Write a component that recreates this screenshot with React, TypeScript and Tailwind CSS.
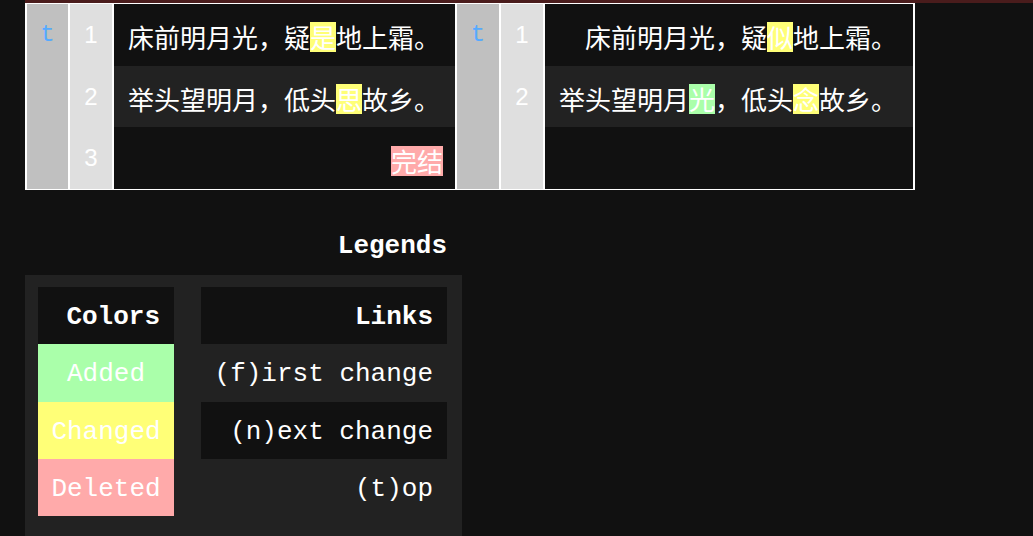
import React from "react";

type Seg = { t: string; c?: "add" | "chg" | "del" };

const hl: Record<string, string> = {
  add: "bg-[#aaffaa]",
  chg: "bg-[#ffff77]",
  del: "bg-[#ffaaaa]",
};

function Line({ segs }: { segs: Seg[] }) {
  return (
    <span className="whitespace-pre leading-[30px]">
      {segs.map((s, i) =>
        s.c ? (
          <span key={i} className={`inline-block h-[30px] leading-[30px] ${hl[s.c]}`}>
            {s.t}
          </span>
        ) : (
          <span key={i}>{s.t}</span>
        )
      )}
    </span>
  );
}

const rowH = ["h-[62px]", "h-[61px]", "h-[62px]"];
const rowBg = ["bg-[#111111]", "bg-[#222222]", "bg-[#111111]"];

function TCol({ w, showT }: { w: string; showT: boolean }) {
  return (
    <div className={`${w} flex flex-col bg-[#c0c0c0]`}>
      {rowH.map((h, i) => (
        <div key={i} className={`${h} flex items-center justify-center`}>
          {i === 0 && showT ? (
            <span className="font-['Liberation_Mono',monospace] text-[24px] text-[#55aaff]">t</span>
          ) : null}
        </div>
      ))}
    </div>
  );
}

function NumCol({ n }: { n: number }) {
  return (
    <div className="w-[42px] flex flex-col bg-[#dfdfdf]">
      {rowH.map((h, i) => (
        <div key={i} className={`${h} flex items-center justify-center`}>
          {i < n ? (
            <span className="font-['Liberation_Sans',sans-serif] text-[24px] text-white">{i + 1}</span>
          ) : null}
        </div>
      ))}
    </div>
  );
}

function TextCol({ w, rows }: { w: string; rows: (React.ReactNode | null)[] }) {
  return (
    <div className={`${w} flex flex-col font-['Noto_Sans_CJK_SC',sans-serif] text-[26px] text-white`}>
      {rowH.map((h, i) => (
        <div key={i} className={`${h} ${rowBg[i]} flex items-center pl-[14px] pr-[12px] pt-[4px]`}>
          {rows[i]}
        </div>
      ))}
    </div>
  );
}

export default function App() {
  const mono = "font-['Liberation_Mono',monospace] text-[26px]";
  return (
    <div className="min-h-screen bg-[#111111] text-white overflow-hidden">
      <div className="ml-[25px] h-[3px] bg-[#4a1c1c]" />
      <div className="ml-[25px] inline-flex gap-[2px] bg-white pl-[2px] pt-[1px] pr-[2px] pb-[1px]">
        <TCol w="w-[41px]" showT />
        <NumCol n={3} />
        <TextCol
          w="w-[341px]"
          rows={[
            <Line segs={[{ t: "床前明月光，疑" }, { t: "是", c: "chg" }, { t: "地上霜。" }]} />,
            <Line segs={[{ t: "举头望明月，低头" }, { t: "思", c: "chg" }, { t: "故乡。" }]} />,
            <div className="w-full text-right">
              <Line segs={[{ t: "完结", c: "del" }]} />
            </div>,
          ]}
        />
        <TCol w="w-[42px]" showT />
        <NumCol n={2} />
        <TextCol
          w="w-[368px]"
          rows={[
            <Line segs={[{ t: "\u3000床前明月光，疑" }, { t: "似", c: "chg" }, { t: "地上霜。" }]} />,
            <Line
              segs={[
                { t: "举头望明月" },
                { t: "光", c: "add" },
                { t: "，低头" },
                { t: "念", c: "chg" },
                { t: "故乡。" },
              ]}
            />,
            null,
          ]}
        />
      </div>

      <div className="ml-[25px] w-[437px]">
        <div className={`${mono} font-bold mt-[41px] mb-[14px] h-[30px] leading-[30px] text-right pr-[15px]`}>
          Legends
        </div>
        <div className={`${mono} bg-[#222222] pt-[12px] pl-[13px] pr-[15px] pb-[30px] flex gap-[27px]`}>
          <div className="w-[136px] flex flex-col">
            <div className="h-[57px] pt-[3px] bg-[#111111] flex items-center justify-end pr-[14px] font-bold">Colors</div>
            <div className="h-[58px] pt-[3px] bg-[#aaffaa] flex items-center justify-center">Added</div>
            <div className="h-[57px] pt-[3px] bg-[#ffff77] flex items-center justify-center">Changed</div>
            <div className="h-[57px] pt-[3px] bg-[#ffaaaa] flex items-center justify-center">Deleted</div>
          </div>
          <div className="flex-1 flex flex-col">
            <div className="h-[57px] pt-[3px] bg-[#111111] flex items-center justify-end pr-[14px] font-bold">Links</div>
            <div className="h-[58px] pt-[3px] flex items-center justify-end pr-[14px]">(f)irst change</div>
            <div className="h-[57px] pt-[3px] bg-[#111111] flex items-center justify-end pr-[14px]">(n)ext change</div>
            <div className="h-[57px] pt-[3px] flex items-center justify-end pr-[14px]">(t)op</div>
          </div>
        </div>
      </div>
    </div>
  );
}
